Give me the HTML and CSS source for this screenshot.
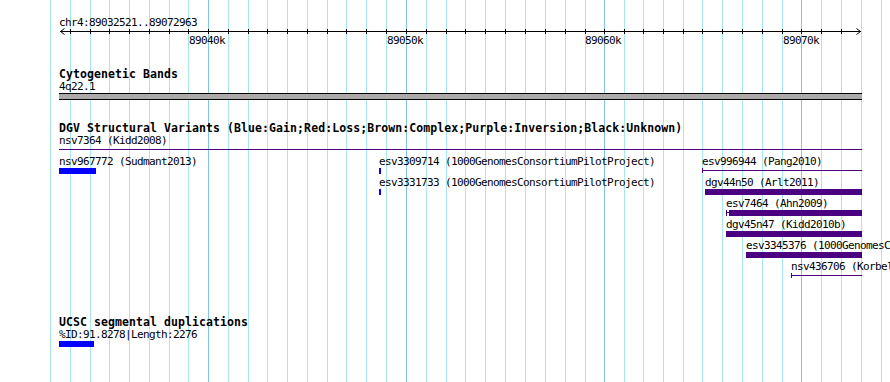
FILE: index.html
```html
<!DOCTYPE html>
<html lang="en">
<head>
  <meta charset="UTF-8">
  <meta name="viewport" content="width=device-width, initial-scale=1.0">
  <title>chr4:89032521..89072963</title>
  <link rel="stylesheet" href="styles.css">
</head>
<body>
  <div class="panel">
    <svg class="grid" width="890" height="382" viewBox="0 0 890 382">
      <path class="grid-minor" d="M50.5 0V382M70.5 0V382M90.5 0V382M109.5 0V382M129.5 0V382M149.5 0V382M169.5 0V382M188.5 0V382M228.5 0V382M248.5 0V382M267.5 0V382M287.5 0V382M307.5 0V382M327.5 0V382M346.5 0V382M366.5 0V382M386.5 0V382M426.5 0V382M446.5 0V382M465.5 0V382M485.5 0V382M505.5 0V382M525.5 0V382M545.5 0V382M565.5 0V382M585.5 0V382M624.5 0V382M643.5 0V382M663.5 0V382M683.5 0V382M702.5 0V382M722.5 0V382M742.5 0V382M762.5 0V382M782.5 0V382M821.5 0V382M841.5 0V382M861.5 0V382M881.5 0V382"/>
      <path class="grid-major" d="M208.5 0V382M406.5 0V382M604.5 0V382M801.5 0V382"/>
    </svg>

    <div class="ruler">
      <div class="ruler-title">chr4:89032521..89072963</div>
      <svg class="axis" width="890" height="47" viewBox="0 0 890 47">
        <path class="axis-line" d="M60 31.5H860.5"/>
        <path class="axis-ticks" d="M70.5 29V34M90.5 29V34M109.5 29V34M129.5 29V34M149.5 29V34M169.5 29V34M188.5 29V34M208.5 29V34M228.5 29V34M248.5 29V34M267.5 29V34M287.5 29V34M307.5 29V34M327.5 29V34M346.5 29V34M366.5 29V34M386.5 29V34M406.5 29V34M426.5 29V34M446.5 29V34M465.5 29V34M485.5 29V34M505.5 29V34M525.5 29V34M545.5 29V34M565.5 29V34M585.5 29V34M604.5 29V34M624.5 29V34M643.5 29V34M663.5 29V34M683.5 29V34M702.5 29V34M722.5 29V34M742.5 29V34M762.5 29V34M782.5 29V34M801.5 29V34M821.5 29V34M841.5 29V34"/>
        <path class="axis-arrow" d="M64.5 28.5L60.5 31.5L64.5 34.5M856.5 28.5L860.5 31.5L856.5 34.5"/>
      </svg>
      <span class="tick-label" style="left:189px">89040k</span>
      <span class="tick-label" style="left:387px">89050k</span>
      <span class="tick-label" style="left:585px">89060k</span>
      <span class="tick-label" style="left:783px">89070k</span>
    </div>

    <section class="track track-cyto">
      <h2 class="track-title">Cytogenetic Bands</h2>
      <div class="lane">
        <div class="row">
          <div class="feature" style="left:0">
            <div class="label">4q22.1</div>
            <div class="band" style="width:803px"></div>
          </div>
        </div>
      </div>
    </section>

    <section class="track track-dgv">
      <h2 class="track-title">DGV Structural Variants (Blue:Gain;Red:Loss;Brown:Complex;Purple:Inversion;Black:Unknown)</h2>
      <div class="lane">
        <div class="row">
          <div class="feature" style="left:0">
            <div class="label">nsv7364 (Kidd2008)</div>
            <div class="line purple" style="width:803px"></div>
          </div>
        </div>
        <div class="row">
          <div class="feature" style="left:0">
            <div class="label">nsv967772 (Sudmant2013)</div>
            <div class="bar blue" style="width:37px"></div>
          </div>
          <div class="feature" style="left:320px">
            <div class="label">esv3309714 (1000GenomesConsortiumPilotProject)</div>
            <div class="bar blue" style="width:2px"></div>
          </div>
          <div class="feature" style="left:643px">
            <div class="label">esv996944 (Pang2010)</div>
            <div class="line purple capped" style="width:160px"></div>
          </div>
        </div>
        <div class="row">
          <div class="feature" style="left:320px">
            <div class="label">esv3331733 (1000GenomesConsortiumPilotProject)</div>
            <div class="bar blue" style="width:2px"></div>
          </div>
          <div class="feature" style="left:646px">
            <div class="label">dgv44n50 (Arlt2011)</div>
            <div class="bar purple" style="width:157px"></div>
          </div>
        </div>
        <div class="row">
          <div class="feature" style="left:667px">
            <div class="label">esv7464 (Ahn2009)</div>
            <div class="split purple" style="width:136px">
              <i class="split-cap"></i><i class="split-stem"></i><i class="split-fill"></i>
            </div>
          </div>
        </div>
        <div class="row">
          <div class="feature" style="left:667px">
            <div class="label">dgv45n47 (Kidd2010b)</div>
            <div class="bar purple" style="width:136px"></div>
          </div>
        </div>
        <div class="row">
          <div class="feature" style="left:687px">
            <div class="label">esv3345376 (1000GenomesConsortiumPilotProject)</div>
            <div class="bar purple" style="width:116px"></div>
          </div>
        </div>
        <div class="row">
          <div class="feature" style="left:732px">
            <div class="label">nsv436706 (Korbel2007)</div>
            <div class="line purple capped" style="width:71px"></div>
          </div>
        </div>
      </div>
    </section>

    <section class="track track-ucsc">
      <h2 class="track-title">UCSC segmental duplications</h2>
      <div class="lane">
        <div class="row">
          <div class="feature" style="left:0">
            <div class="label">%ID:91.8278|Length:2276</div>
            <div class="bar blue" style="width:35px"></div>
          </div>
        </div>
      </div>
    </section>
  </div>
</body>
</html>
```

FILE: styles.css
```css
html, body {
  margin: 0;
  padding: 0;
  background: #fff;
  overflow: hidden;
}

body {
  font-family: "DejaVu Sans Mono", "Liberation Mono", monospace;
  color: #000;
}

.panel {
  position: relative;
  width: 890px;
  height: 382px;
  overflow: hidden;
  background: #fff;
}

.grid {
  position: absolute;
  top: 0;
  left: 0;
  shape-rendering: crispEdges;
}

.grid-minor {
  stroke: #a8e6f0;
  stroke-width: 1;
}

.grid-major {
  stroke: #80c4ea;
  stroke-width: 1;
}

/* ruler */
.ruler {
  position: relative;
  height: 47px;
  padding-top: 16px;
  box-sizing: border-box;
}

.ruler-title {
  position: relative;
  margin-left: 59px;
  font-size: 11px;
  line-height: 13px;
  letter-spacing: -0.62px;
  white-space: nowrap;
  z-index: 1;
}

.axis {
  position: absolute;
  top: 0;
  left: 0;
}

.axis-line,
.axis-ticks {
  stroke: #000;
  stroke-width: 1;
  fill: none;
  shape-rendering: crispEdges;
}

.axis-arrow {
  stroke: #000;
  stroke-width: 1;
  fill: none;
}

.tick-label {
  position: absolute;
  top: 34px;
  font-size: 11px;
  line-height: 13px;
  letter-spacing: -0.62px;
  white-space: nowrap;
}

/* tracks */
.track {
  position: relative;
}

.track-cyto {
  margin-top: 21px;
}

.track-dgv {
  margin-top: 21px;
}

.track-ucsc {
  margin-top: 35px;
}

.track-title {
  margin: 0 0 0 59px;
  font-size: 11.5px;
  font-weight: bold;
  line-height: 12px;
  letter-spacing: 0.08px;
  white-space: nowrap;
}

.lane {
  position: relative;
  margin-left: 59px;
}

.row {
  position: relative;
  height: 21px;
}

.feature {
  position: absolute;
  top: 0;
}

.label {
  height: 13px;
  font-size: 11px;
  line-height: 13px;
  letter-spacing: -0.62px;
  white-space: nowrap;
}

.band {
  height: 7px;
  box-sizing: border-box;
  border-top: 1px solid #000;
  border-bottom: 1px solid #000;
  background: #aaaaaa;
}

.bar {
  height: 6px;
}

.bar.blue {
  background: #0000ff;
}

.bar.purple {
  background: #4b0082;
}

/* thin connector glyph, optional end cap */
.line {
  position: relative;
  height: 6px;
}

.line::before {
  content: "";
  position: absolute;
  left: 0;
  right: 0;
  top: 2px;
  height: 1px;
  background: #4b0082;
}

.line.capped::after {
  content: "";
  position: absolute;
  left: 0;
  top: 0;
  width: 1px;
  height: 5px;
  background: #4b0082;
}

/* cap + short stem + solid block */
.split {
  display: flex;
  align-items: flex-start;
  height: 6px;
}

.split i {
  display: block;
  background: #4b0082;
}

.split-cap {
  width: 1px;
  height: 6px;
}

.split-stem {
  width: 2px;
  height: 1px;
  margin-top: 2px;
}

.split-fill {
  flex: 1;
  height: 6px;
}
```
